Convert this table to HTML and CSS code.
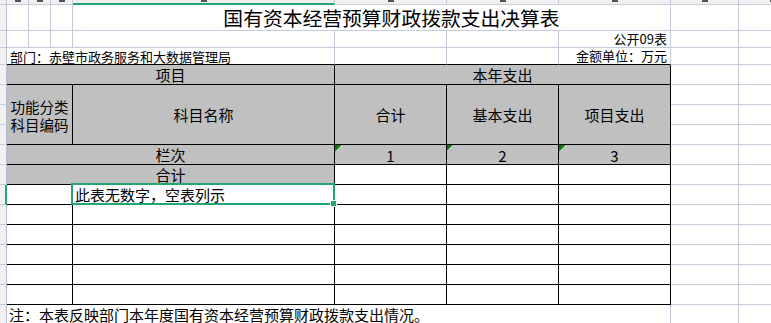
FILE: index.html
```html
<!DOCTYPE html>
<html lang="zh-CN">
<head>
<meta charset="utf-8">
<title>国有资本经营预算财政拨款支出决算表</title>
<link rel="stylesheet" href="styles.css">
</head>
<body>
<div class="sheet">
  <div class="corner"></div>
  <div class="ch"></div>
  <div class="ch"></div>
  <div class="ch"></div>
  <div class="ch on"></div>
  <div class="ch"></div>
  <div class="ch"></div>
  <div class="ch"></div>
  <div class="ch"></div>
  <div class="ch"></div>

  <div class="rh"></div>
  <div></div><div></div><div></div>
  <div class="s4 title">国有资本经营预算财政拨款支出决算表</div>
  <div></div><div></div>

  <div class="rh"></div>
  <div></div><div></div><div></div><div></div><div></div><div></div>
  <div class="rt small">公开09表</div>
  <div></div><div></div>

  <div class="rh"></div>
  <div class="s4 top small lft">部门：赤壁市政务服务和大数据管理局</div>
  <div class="top"></div><div class="top"></div>
  <div class="top rt small">金额单位：万元</div>
  <div></div><div></div>

  <div class="rh"></div>
  <div class="s4 t g ctr">项目</div>
  <div class="s3 t g ctr">本年支出</div>
  <div></div><div></div>

  <div class="rh"></div>
  <div class="s3 r3 t g ctr two"><span class="ln">功能分类</span><span class="ln">科目编码</span></div>
  <div class="r3 t g ctr">科目名称</div>
  <div class="r3 t g ctr">合计</div>
  <div class="r3 t g ctr">基本支出</div>
  <div class="r3 t g ctr">项目支出</div>
  <div></div><div></div>
  <div class="rh"></div><div></div><div></div>
  <div class="rh"></div><div></div><div></div>

  <div class="rh"></div>
  <div class="s4 t g ctr">栏次</div>
  <div class="t g ctr tri">1</div>
  <div class="t g ctr tri">2</div>
  <div class="t g ctr tri">3</div>
  <div></div><div></div>

  <div class="rh"></div>
  <div class="s4 t g ctr">合计</div>
  <div class="t"></div><div class="t"></div><div class="t"></div>
  <div></div><div></div>

  <div class="rh on"></div>
  <div class="s3 t"></div>
  <div class="t sel lft2">此表无数字，空表列示<span class="handle"></span></div>
  <div class="t"></div><div class="t"></div><div class="t"></div>
  <div></div><div></div>

  <div class="rh"></div><div class="s3 t"></div><div class="t"></div><div class="t"></div><div class="t"></div><div class="t"></div><div></div><div></div>
  <div class="rh"></div><div class="s3 t"></div><div class="t"></div><div class="t"></div><div class="t"></div><div class="t"></div><div></div><div></div>
  <div class="rh"></div><div class="s3 t"></div><div class="t"></div><div class="t"></div><div class="t"></div><div class="t"></div><div></div><div></div>
  <div class="rh"></div><div class="s3 t"></div><div class="t"></div><div class="t"></div><div class="t"></div><div class="t"></div><div></div><div></div>
  <div class="rh"></div><div class="s3 t"></div><div class="t"></div><div class="t"></div><div class="t"></div><div class="t"></div><div></div><div></div>

  <div class="rh"></div>
  <div class="s7 lft2">注：本表反映部门本年度国有资本经营预算财政拨款支出情况。</div>
  <div></div><div></div>
</div>
</body>
</html>
```
FILE: styles.css
```css
html, body {
  margin: 0;
  padding: 0;
  background: #ffffff;
  overflow: hidden;
}

body {
  width: 771px;
  height: 323px;
  font-family: "Noto Sans CJK SC", "Noto Sans", sans-serif;
  color: #000;
}

.sheet {
  display: grid;
  grid-template-columns: 7px 22px 22px 22px 262px 112px 112px 112px 68px 68px;
  grid-template-rows: 5px 26px 17px 17px repeat(13, 20px);
  width: 807px;
}

.sheet > * {
  box-sizing: border-box;
  border-right: 1px solid #c6cbdc;
  border-bottom: 1px solid #c6cbdc;
  display: flex;
  align-items: center;
  min-width: 0;
  white-space: nowrap;
  font-size: 15px;
  line-height: 16px;
}

.corner,
.ch {
  background: #f0f0f0;
  overflow: hidden;
  align-items: flex-start;
  justify-content: center;
}

.ch::before {
  content: "";
  width: 6px;
  height: 2px;
  background: #555;
}

.ch.on {
  border-bottom: 2px solid #22a772;
}

.rh {
  background: #f1f1f1;
  border-right-color: #b4bbce;
}

.rh.on {
  border-right: 2px solid #22a772;
}

.s3 { grid-column: span 3; }
.s4 { grid-column: span 4; }
.s7 { grid-column: span 7; }
.r3 { grid-row: span 3; }

.t {
  border-right-color: #000;
  border-bottom-color: #000;
}

.top {
  border-bottom-color: #000;
}

.g {
  background-color: #c0c0c0;
}

.ctr {
  justify-content: center;
  text-align: center;
}

.two {
  flex-direction: column;
  gap: 3px;
  padding-top: 1px;
  font-size: 14.5px;
}

.ln {
  display: block;
  line-height: 15px;
}

.rt {
  justify-content: flex-end;
  padding-right: 3px;
}

.lft {
  padding-left: 3px;
  padding-top: 1px;
}

.lft2 {
  padding-left: 2px;
}

.small {
  font-size: 13px;
  line-height: 14px;
}

.title {
  font-size: 19.8px;
  line-height: 22px;
  justify-content: center;
  padding-left: 40px;
}

.tri {
  background-image: linear-gradient(135deg, #0a7f0a 50%, transparent 50%);
  background-size: 6px 6px;
  background-repeat: no-repeat;
  background-position: 0 0;
  padding-top: 2px;
}

.sel {
  position: relative;
  z-index: 2;
}

.sel::after {
  content: "";
  position: absolute;
  left: -2px;
  top: -2px;
  right: -1px;
  bottom: -1px;
  border: 2px solid #22a772;
}

.handle {
  position: absolute;
  right: -3px;
  bottom: -3px;
  width: 7px;
  height: 7px;
  box-sizing: border-box;
  background: #22a772;
  border: 1px solid #ffffff;
  z-index: 3;
}
```
